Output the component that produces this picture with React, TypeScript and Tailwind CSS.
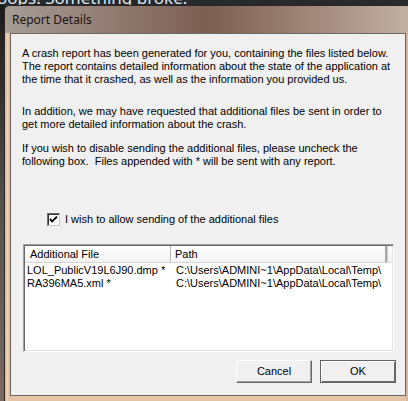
import React from "react";

const ui = { fontFamily: '"Liberation Sans", Arial, sans-serif' };
const title = { fontFamily: '"Noto Sans", "Open Sans", sans-serif' };

export default function App() {
  return (
    <div className="w-[408px] h-[401px] overflow-hidden bg-[#262a2e] flex flex-col">
      <div className="h-[5px] overflow-hidden shrink-0">
        <div
          className="text-[17px] leading-[20px] -mt-[12px] -ml-[3px] text-[#dfe6ea] whitespace-nowrap"
          style={title}
        >
          oops! Something broke.
        </div>
      </div>
      <div className="flex shrink-0">
        <div className="w-[4px] h-[396px] shrink-0 bg-gradient-to-b from-[#1c1c1c] via-[#55504c] to-[#7a6a60]" />
        <div className="w-[408px] h-[400px] shrink-0 rounded-[6px] border border-[#2e241f] bg-gradient-to-b from-[#bfae9f] via-[#dcbfa2] to-[#e4c6a7] flex flex-col overflow-hidden">
          <div className="h-[27px] shrink-0 flex items-center pl-[7px] bg-gradient-to-r from-[#a69d97] via-[#7c5e52] to-[#c3b2a4]">
            <span className="text-[12px] text-[#1b1410]" style={title}>
              Report Details
            </span>
          </div>
          <div className="flex flex-1">
            <div className="w-[5px] shrink-0 bg-gradient-to-r from-[#d6b89c] via-[#ecd2b6] to-[#d8b99b]" />
            <div
              className="w-[396px] h-[363px] shrink-0 border border-[#6e6660] bg-[#f0f0f0] flex flex-col text-[11px] leading-[13px] text-black"
              style={ui}
            >
              <div className="pl-[11px] pt-[13px]">
                <p>
                  A crash report has been generated for you, containing the files listed below.
                  <br />
                  The report contains detailed information about the state of the application at
                  <br />
                  the time that it crashed, as well as the information you provided us.
                </p>
                <p className="mt-[19px]">
                  In addition, we may have requested that additional files be sent in order to
                  <br />
                  get more detailed information about the crash.
                </p>
                <p className="mt-[11px] whitespace-pre">
                  {"If you wish to disable sending the additional files, please uncheck the\nfollowing box.  Files appended with * will be sent with any report."}
                </p>
              </div>
              <div className="mt-[45px] pl-[36px] flex items-center gap-[5px] h-[13px]">
                <div className="w-[13px] h-[13px] border border-t-[#6d6d6d] border-l-[#6d6d6d] border-r-[#c8c8c8] border-b-[#c8c8c8] bg-white flex items-center justify-center shadow-[inset_1px_1px_0_#303030]">
                  <svg width="9" height="9" viewBox="0 0 9 9">
                    <path d="M1 4 L3.2 6.4 L8 1.6" stroke="#000" strokeWidth="2" fill="none" />
                  </svg>
                </div>
                <span>I wish to allow sending of the additional files</span>
              </div>
              <div className="mt-[18px] ml-[12px] w-[371px] h-[108px] border border-t-[#a0a0a0] border-l-[#a0a0a0] border-r-[#ffffff] border-b-[#ffffff] shadow-[inset_1px_1px_0_#696969,inset_-1px_-1px_0_#e3e3e3] bg-white p-[1px] overflow-hidden">
                <div className="flex h-[17px] bg-gradient-to-b from-[#ffffff] to-[#f3f3f3] border-b border-[#d5d5d5] whitespace-nowrap">
                  <div className="w-[146px] shrink-0 pl-[5px] leading-[16px] border-r border-[#b5b5b5] shadow-[1px_0_0_#ffffff]">
                    Additional File
                  </div>
                  <div className="w-[216px] shrink-0 pl-[4px] leading-[16px] border-r-2 border-[#a8a8a8]">
                    Path
                  </div>
                  <div className="flex-1 border-l border-[#d0d0d0]" />
                </div>
                <div className="flex whitespace-nowrap pt-[1px]">
                  <div className="w-[147px] shrink-0 pl-[2px]">LOL_PublicV19L6J90.dmp *</div>
                  <div className="w-[210px] shrink-0 pl-[4px] overflow-hidden">
                    C:\Users\ADMINI~1\AppData\Local\Temp\
                  </div>
                </div>
                <div className="flex whitespace-nowrap">
                  <div className="w-[147px] shrink-0 pl-[2px]">RA396MA5.xml *</div>
                  <div className="w-[210px] shrink-0 pl-[4px] overflow-hidden">
                    C:\Users\ADMINI~1\AppData\Local\Temp\
                  </div>
                </div>
              </div>
              <div className="mt-[8px] flex justify-end gap-[8px] pr-[9px]">
                <button className="w-[76px] h-[23px] bg-[#f0f0f0] border border-t-[#ffffff] border-l-[#ffffff] border-r-[#696969] border-b-[#696969] shadow-[inset_-1px_-1px_0_#a0a0a0] text-[11px]">
                  Cancel
                </button>
                <button className="w-[76px] h-[23px] bg-[#f0f0f0] border border-[#646464] shadow-[inset_1px_1px_0_#ffffff,inset_-1px_-1px_0_#696969] text-[11px]">
                  OK
                </button>
              </div>
            </div>
            <div className="flex-1 bg-gradient-to-r from-[#d2b397] to-[#e2c4a6]" />
          </div>
        </div>
      </div>
    </div>
  );
}
